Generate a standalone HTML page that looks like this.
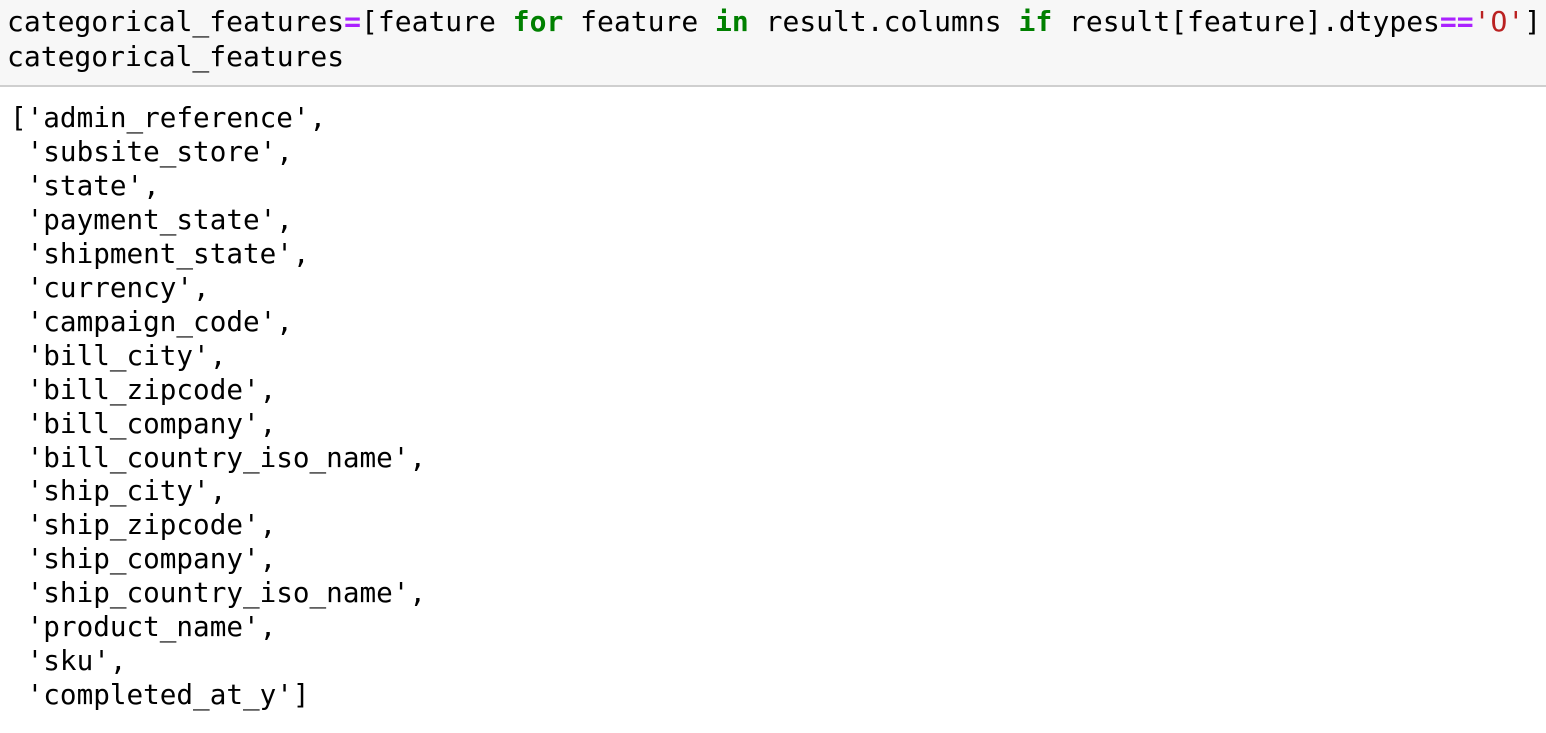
<!DOCTYPE html>
<html><head><meta charset="utf-8"><style>
html,body{margin:0;padding:0;background:#fff;width:1546px;height:733px;overflow:hidden}
.in{position:absolute;left:0;top:0;width:1546px;height:85px;background:#f7f7f7;border-bottom:2px solid #cfcfcf}
pre{margin:0;font-family:"DejaVu Sans Mono","Liberation Mono",monospace;font-size:28px;color:#000;position:absolute;white-space:pre}
.code{left:7px;top:4px;line-height:35px}
.out{left:10px;top:101px;line-height:33.95px;font-size:27.65px}
.k{color:#008000;font-weight:bold}.o{color:#aa22ff;font-weight:bold}.s{color:#ba2121}
</style></head><body>
<div class="in"></div>
<pre class="code">categorical_features<span class="o">=</span>[feature <span class="k">for</span> feature <span class="k">in</span> result.columns <span class="k">if</span> result[feature].dtypes<span class="o">==</span><span class="s">'O'</span>]
categorical_features</pre>
<pre class="out">['admin_reference',
 'subsite_store',
 'state',
 'payment_state',
 'shipment_state',
 'currency',
 'campaign_code',
 'bill_city',
 'bill_zipcode',
 'bill_company',
 'bill_country_iso_name',
 'ship_city',
 'ship_zipcode',
 'ship_company',
 'ship_country_iso_name',
 'product_name',
 'sku',
 'completed_at_y']</pre>
</body></html>
